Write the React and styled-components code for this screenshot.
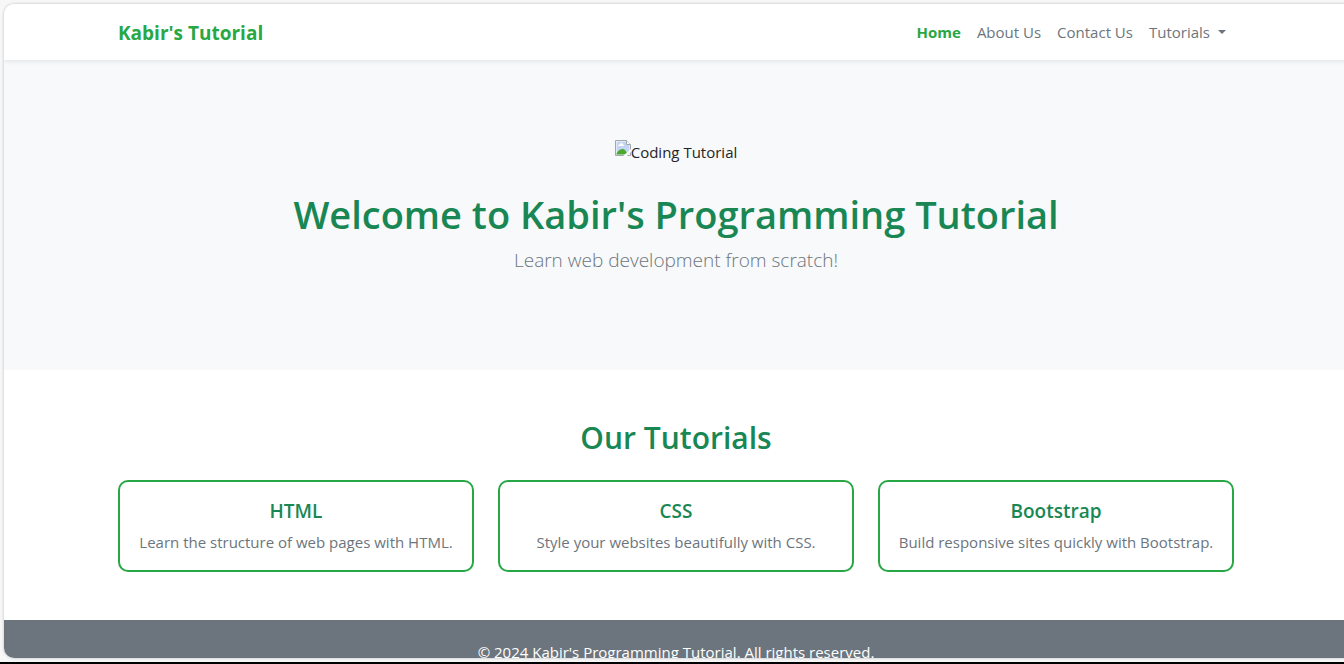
import React from "react";
import styled, { createGlobalStyle } from "styled-components";

const GlobalStyle = createGlobalStyle`
  *, *::before, *::after { box-sizing: border-box; }
  body {
    margin: 0;
    overflow: hidden;
    background: #f7f7f7;
    color: #212529;
    font-family: "Segoe UI", "Open Sans", "Noto Sans", sans-serif;
    font-size: 15px;
    line-height: 24px;
  }
  h1, h2, h3, p, ul { margin: 0; padding: 0; }
`;

const Desktop = styled.div`
  display: flex;
  height: 100vh;
  padding: 4px 0 4px 4px;
  border-bottom: 2px solid #000;
`;

const Window = styled.div`
  flex: 1;
  margin-right: -4px;
  overflow: hidden;
  background: #fff;
  border-radius: 10px 0 0 10px;
  box-shadow: 0 0 3px rgba(0, 0, 0, 0.25);
`;

const Container = styled.div`
  width: 100%;
  max-width: 1140px;
  margin: 0 auto;
  padding: 0 12px;
`;

const Navbar = styled.nav`
  position: relative;
  background: #fff;
  box-shadow: 0 2px 4px rgba(0, 0, 0, 0.08);
`;

const NavRow = styled(Container)`
  display: flex;
  align-items: center;
  justify-content: space-between;
  min-height: 56px;
`;

const Brand = styled.a`
  padding-top: 2px;
  color: #28a745;
  font-size: 19px;
  font-weight: 700;
  line-height: 32px;
  text-decoration: none;
`;

const NavList = styled.ul`
  display: flex;
  list-style: none;
`;

const NavLink = styled.a`
  display: block;
  padding: 8px;
  color: ${(p) => (p.$active ? "#28a745" : "#6c757d")};
  font-weight: ${(p) => (p.$active ? 700 : 400)};
  text-decoration: none;
`;

const DropdownToggle = styled.button`
  display: flex;
  align-items: center;
  gap: 8px;
  padding: 8px;
  border: 0;
  background: none;
  color: #6c757d;
  font: inherit;
  cursor: pointer;

  &::after {
    content: "";
    border-top: 4px solid;
    border-left: 4px solid transparent;
    border-right: 4px solid transparent;
  }
`;

const Hero = styled.header`
  padding: 80px 0 94px;
  background: #f8f9fa;
  text-align: center;
`;

const HeroImage = styled.div`
  display: flex;
  justify-content: center;
  margin-bottom: 24px;

  svg { flex: none; }
`;

const HeroTitle = styled.h1`
  margin-bottom: 4px;
  color: #198754;
  font-size: 38px;
  font-weight: 600;
  line-height: 52px;
`;

const Lead = styled.p`
  color: #6c757d;
  font-size: 19px;
  font-weight: 300;
  line-height: 32px;
`;

const Section = styled.section`
  padding: 48px 0;
  text-align: center;
`;

const SectionTitle = styled.h2`
  margin-bottom: 22px;
  color: #198754;
  font-size: 30px;
  font-weight: 600;
  line-height: 40px;
`;

const CardGrid = styled.div`
  display: grid;
  grid-template-columns: repeat(3, 1fr);
  gap: 24px;
`;

const Card = styled.article`
  padding: 16px;
  border: 2px solid #28a745;
  border-radius: 10px;
`;

const CardTitle = styled.h3`
  margin-bottom: 6px;
  color: #198754;
  font-size: 19px;
  font-weight: 600;
  line-height: 26px;
`;

const CardText = styled.p`
  color: #6c757d;
`;

const Footer = styled.footer`
  padding: 20px 0;
  background: #6c757d;
  color: #fff;
  text-align: center;
`;

const tutorials = [
  { title: "HTML", text: "Learn the structure of web pages with HTML." },
  { title: "CSS", text: "Style your websites beautifully with CSS." },
  { title: "Bootstrap", text: "Build responsive sites quickly with Bootstrap." },
];

function BrokenImageIcon() {
  return (
    <svg width="16" height="16" viewBox="0 0 16 16" aria-hidden="true">
      <path d="M.5.5h11l4 4v11H.5z" fill="#fff" />
      <path d="M1.500 1.500h10v3.500h3v9.500h-13z" fill="#c3d4f4" />
      <path d="M3 6q0-1.500 1.500-1.500Q5 3 6.500 3T8 4.500Q9 4.500 9 6z" fill="#fff" />
      <path d="M1.500 14.500v-1q2.500-4.500 6-4.500 3 0 5 5.500z" fill="#4da82e" />
      <path d="M.5 15.500V.5h11l4 4v11z" fill="none" stroke="#a3a7ac" />
      <path d="M11.500.5v4h4" fill="#fff" stroke="#a3a7ac" />
      <path d="M8 16l8-7v3l-4 4z" fill="#f8f9fa" />
    </svg>
  );
}

export default function App() {
  return (
    <>
      <GlobalStyle />
      <Desktop>
        <Window>
          <Navbar>
            <NavRow>
              <Brand href="#">Kabir's Tutorial</Brand>
              <NavList>
                <li><NavLink href="#" $active>Home</NavLink></li>
                <li><NavLink href="#about">About Us</NavLink></li>
                <li><NavLink href="#contact">Contact Us</NavLink></li>
                <li><DropdownToggle type="button" aria-haspopup="true">Tutorials</DropdownToggle></li>
              </NavList>
            </NavRow>
          </Navbar>
          <Hero>
            <Container>
              <HeroImage>
                <BrokenImageIcon />
                <span>Coding Tutorial</span>
              </HeroImage>
              <HeroTitle>Welcome to Kabir's Programming Tutorial</HeroTitle>
              <Lead>Learn web development from scratch!</Lead>
            </Container>
          </Hero>
          <Section>
            <Container>
              <SectionTitle>Our Tutorials</SectionTitle>
              <CardGrid>
                {tutorials.map((t) => (
                  <Card key={t.title}>
                    <CardTitle>{t.title}</CardTitle>
                    <CardText>{t.text}</CardText>
                  </Card>
                ))}
              </CardGrid>
            </Container>
          </Section>
          <Footer>
            <p>© 2024 Kabir's Programming Tutorial. All rights reserved.</p>
          </Footer>
        </Window>
      </Desktop>
    </>
  );
}
